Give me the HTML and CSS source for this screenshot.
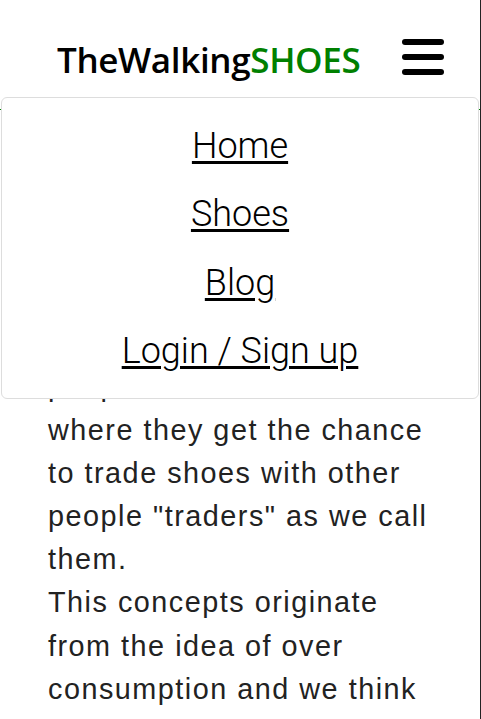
FILE: index.html
```html
<!DOCTYPE html>
<html lang="en">
<head>
<meta charset="utf-8">
<title>TheWalkingSHOES</title>
<link rel="stylesheet" href="styles.css">
</head>
<body>
<div class="page">
  <header class="header">
    <a class="logo" href="#">TheWalking<span class="logo-accent">SHOES</span></a>
    <button class="menu-toggle" aria-label="Menu">
      <svg width="42" height="36" viewBox="0 0 42 36">
        <line x1="3" y1="3" x2="39" y2="3" />
        <line x1="3" y1="18" x2="39" y2="18" />
        <line x1="3" y1="33" x2="39" y2="33" />
      </svg>
    </button>
  </header>
  <nav class="dropdown">
    <ul class="dropdown-list">
      <li class="dropdown-item"><a href="#">Home</a></li>
      <li class="dropdown-item"><a href="#">Shoes</a></li>
      <li class="dropdown-item"><a href="#">Blog</a></li>
      <li class="dropdown-item"><a href="#">Login / Sign up</a></li>
    </ul>
  </nav>
  <main class="content">
    <h2 class="content-title">About us</h2>
    <p class="content-text">Our website is made for people around the world where they get the chance to trade shoes with other people "traders" as we call them.<br>This concepts originate from the idea of over consumption and we think</p>
    <p class="content-text content-more">it is time to change the way we buy shoes.</p>
  </main>
</div>
</body>
</html>
```

FILE: styles.css
```css
html, body {
  margin: 0;
  padding: 0;
  background: #fff;
}

.page {
  position: relative;
  width: 481px;
  height: 719px;
  box-sizing: border-box;
  border-right: 1px solid #222;
  overflow: hidden;
}

.header {
  box-sizing: border-box;
  height: 110px;
  padding: 5px 36px 0 57px;
  border-bottom: 1px solid #008000;
  display: flex;
  align-items: center;
  justify-content: space-between;
}

.logo {
  font-family: "Open Sans", "Noto Sans", sans-serif;
  font-size: 35px;
  font-weight: 600;
  line-height: 35px;
  color: #000;
  text-decoration: none;
  margin-top: 4px;
  letter-spacing: -0.35px;
}

.logo-accent {
  color: #008000;
}

.menu-toggle {
  border: 0;
  background: none;
  padding: 0;
  display: block;
  width: 42px;
  height: 36px;
}

.menu-toggle svg {
  display: block;
  stroke: #000;
  stroke-width: 6;
  stroke-linecap: round;
}

.dropdown {
  position: absolute;
  top: 97px;
  left: 1px;
  width: 478px;
  box-sizing: border-box;
  background: #fff;
  border: 1px solid #ddd;
  border-radius: 6px;
  padding: 13.5px 0 12.5px;
}

.dropdown-list {
  list-style: none;
  margin: 0;
  padding: 0;
}

.dropdown-item {
  text-align: center;
  padding: 15px 0;
  font-family: Roboto, "Liberation Sans", sans-serif;
  font-weight: 300;
  font-size: 36px;
  line-height: 38.5px;
}

.dropdown-item a {
  color: #000;
  text-decoration: underline;
  text-decoration-thickness: 2.5px;
  text-underline-offset: 3px;
}

.content {
  padding: 41.5px 48px 0;
  font-family: "Liberation Sans", Arial, sans-serif;
  color: #222;
}

.content-title {
  margin: 0 0 113px;
  font-size: 48px;
  line-height: 57.6px;
}

.content-text {
  margin: 0;
  font-size: 28.8px;
  line-height: 43.2px;
  letter-spacing: 1.5px;
}

.content-more {
  margin-top: 20px;
}
```
